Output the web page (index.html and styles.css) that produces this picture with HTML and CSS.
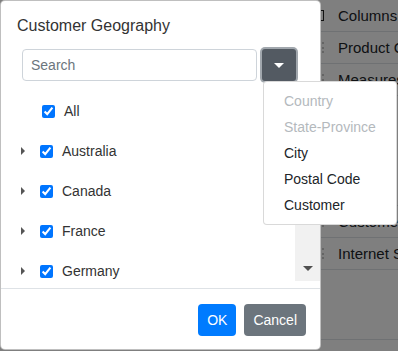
FILE: index.html
```html
<!DOCTYPE html>
<html lang="en">
<head>
<meta charset="utf-8">
<title>Customer Geography</title>
<link rel="stylesheet" href="styles.css">
</head>
<body>
<div class="page">
  <div class="bg">
    <div class="bg-left"></div>
    <div class="panel">
      <div class="prow"><span class="ico"></span><span class="ptext">Columns</span></div>
      <div class="prow"><span class="grip"></span><span class="ptext">Product Category</span></div>
      <div class="prow"><span class="grip"></span><span class="ptext">Measures</span></div>
      <div class="prow filler"></div>
      <div class="prow"><span class="grip"></span><span class="ptext">Customer</span></div>
      <div class="prow"><span class="grip"></span><span class="ptext">Internet Sales</span></div>
      <div class="prow empty"></div>
    </div>
  </div>
  <div class="backdrop"></div>
  <div class="dialog">
    <div class="dlg-head">Customer Geography</div>
    <div class="search-row">
      <input class="search" type="text" placeholder="Search">
      <div class="dd">
        <button class="dd-btn" type="button"><span class="caret-down"></span></button>
        <ul class="menu">
          <li class="mitem disabled">Country</li>
          <li class="mitem disabled">State-Province</li>
          <li class="mitem">City</li>
          <li class="mitem">Postal Code</li>
          <li class="mitem">Customer</li>
        </ul>
      </div>
    </div>
    <div class="tree-wrap">
      <ul class="tree">
        <li class="node root"><input class="chk" type="checkbox" checked><span class="lbl">All</span></li>
        <li class="node"><span class="tcaret"></span><input class="chk" type="checkbox" checked><span class="lbl">Australia</span></li>
        <li class="node"><span class="tcaret"></span><input class="chk" type="checkbox" checked><span class="lbl">Canada</span></li>
        <li class="node"><span class="tcaret"></span><input class="chk" type="checkbox" checked><span class="lbl">France</span></li>
        <li class="node"><span class="tcaret"></span><input class="chk" type="checkbox" checked><span class="lbl">Germany</span></li>
      </ul>
      <div class="vscroll"><span class="sarrow"></span></div>
    </div>
    <div class="dlg-foot">
      <button class="btn ok" type="button">OK</button>
      <button class="btn cancel" type="button">Cancel</button>
    </div>
  </div>
</div>
</body>
</html>
```
FILE: styles.css
```css
* { box-sizing: border-box; }
html, body { margin: 0; padding: 0; }
body {
  width: 398px;
  height: 351px;
  overflow: hidden;
  font-family: "Liberation Sans", Arial, sans-serif;
  color: #212529;
  background: #fff;
}
.page { position: relative; width: 398px; height: 351px; overflow: hidden; }

/* background page */
.bg { display: flex; height: 351px; }
.bg-left { flex: 0 0 305px; }
.panel { flex: 1; min-width: 0; display: flex; flex-direction: column; }
.prow {
  flex: none;
  height: 32px;
  display: flex;
  align-items: center;
  border-bottom: 1px solid #dee2e6;
  padding-left: 17px;
  font-size: 15px;
  color: #212529;
  white-space: nowrap;
}
.prow.filler { height: 110px; }
.prow.empty { height: 70px; }
.ptext { margin-left: 14px; }
.grip {
  flex: none;
  width: 2px;
  height: 11px;
  border-left: 2px dotted #c8c8c8;
}
.ico {
  flex: none;
  width: 10px;
  height: 11px;
  margin-left: -8px;
  margin-right: 0;
  border: 1.5px solid #222;
  border-left: none;
}

.backdrop {
  position: absolute;
  inset: 0;
  background: rgba(0, 0, 0, 0.5);
}

/* dialog */
.dialog {
  position: absolute;
  left: 0;
  top: 0;
  width: 321px;
  height: 350px;
  background: #fff;
  border: 1px solid rgba(0, 0, 0, 0.25);
  border-radius: 5px;
  display: flex;
  flex-direction: column;
}
.dlg-head {
  padding: 15px 16px 0;
  font-size: 16px;
  line-height: 20px;
  color: #333;
}
.search-row {
  margin-top: 13px;
  padding-left: 21px;
  display: flex;
  gap: 5px;
}
.search {
  width: 235px;
  height: 32px;
  border: 1px solid #ced4da;
  border-radius: 4px;
  padding: 0 8px;
  font-family: inherit;
  font-size: 14px;
  color: #495057;
  outline: none;
}
.search::placeholder { color: #6c757d; }
.dd { position: relative; }
.dd-btn {
  width: 34px;
  height: 32px;
  border: none;
  border-radius: 3px;
  background: #535a62;
  box-shadow: 0 0 0 2px rgba(130, 138, 145, 0.75);
  display: flex;
  align-items: center;
  justify-content: center;
  padding: 0;
}
.caret-down {
  width: 0;
  height: 0;
  border-top: 5px solid #fff;
  border-left: 5px solid transparent;
  border-right: 5px solid transparent;
}
.menu {
  position: absolute;
  top: 100%;
  left: 1px;
  width: 134px;
  margin: 0;
  padding: 6px 0;
  list-style: none;
  background: #fff;
  border: 1px solid rgba(0, 0, 0, 0.15);
  border-radius: 4px;
  z-index: 5;
}
.mitem {
  padding: 4px 20px;
  font-size: 14px;
  line-height: 18px;
  color: #212529;
  white-space: nowrap;
}
.mitem.disabled { color: #b4b9bd; }

/* tree */
.tree-wrap {
  margin-top: 3px;
  height: 197px;
  display: flex;
}
.tree {
  flex: 1;
  margin: 0;
  padding: 7px 0 0;
  list-style: none;
  overflow: hidden;
}
.node {
  height: 40px;
  display: flex;
  align-items: center;
  padding-left: 20px;
  font-size: 14px;
  color: #333;
}
.node.root { padding-left: 41px; }
.tcaret {
  width: 0;
  height: 0;
  border-left: 4px solid #555;
  border-top: 4px solid transparent;
  border-bottom: 4px solid transparent;
  margin-right: 15px;
}
.chk {
  width: 13px;
  height: 13px;
  margin: 0;
  accent-color: #0075ff;
}
.lbl { margin-left: 9px; }
.vscroll {
  width: 25px;
  background: #f1f1f1;
  display: flex;
  align-items: flex-end;
  justify-content: center;
  padding-bottom: 10px;
}
.sarrow {
  width: 0;
  height: 0;
  border-top: 5px solid #505050;
  border-left: 5px solid transparent;
  border-right: 5px solid transparent;
}

/* footer */
.dlg-foot {
  margin-top: 7px;
  border-top: 1px solid #dee2e6;
  padding: 15px 14px 13px;
  display: flex;
  justify-content: flex-end;
  gap: 8px;
}
.btn {
  height: 32px;
  padding: 0 9px;
  border: none;
  border-radius: 4px;
  font-family: inherit;
  font-size: 14px;
  color: #fff;
}
.btn.ok { background: #007bff; }
.btn.cancel { background: #6c757d; }
```
